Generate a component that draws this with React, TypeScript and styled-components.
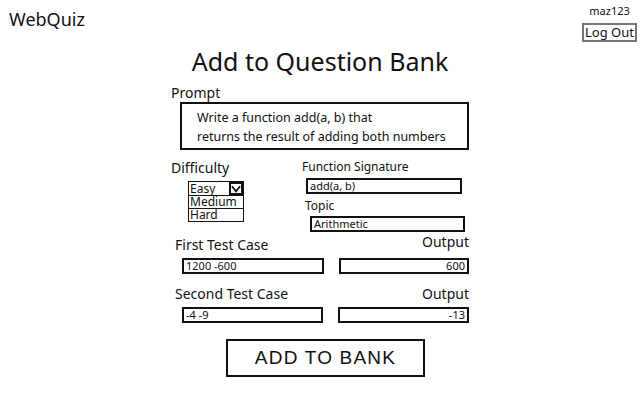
import { createGlobalStyle, styled } from "styled-components";

const GlobalStyle = createGlobalStyle`
  body {
    margin: 0;
    background: #fff;
    color: #111;
    font-family: "Noto Sans", "Open Sans", sans-serif;
  }
  * {
    box-sizing: border-box;
  }
`;

const Page = styled.div`
  width: 640px;
  height: 400px;
  display: flex;
  flex-direction: column;
`;

const Header = styled.div`
  display: flex;
  justify-content: space-between;
  align-items: flex-start;
  height: 44px;
`;

const Logo = styled.div`
  font-size: 18px;
  padding: 7px 0 0 9px;
  line-height: 24px;
`;

const UserBox = styled.div`
  display: flex;
  flex-direction: column;
  align-items: center;
  padding: 3px 3px 0 0;
`;

const UserName = styled.div`
  font-size: 11px;
  line-height: 16px;
  margin-bottom: 4px;
`;

const LogOut = styled.button`
  font-family: inherit;
  font-size: 13px;
  line-height: 13px;
  padding: 1px 1px;
  border: 2px solid #777;
  background: #fff;
  color: #111;
`;

const Title = styled.h1`
  margin: 0;
  font-size: 25px;
  font-weight: 400;
  text-align: center;
  line-height: 34px;
`;

const Form = styled.div`
  width: 298px;
  margin: 6px auto 0;
  display: flex;
  flex-direction: column;
`;

const Label = styled.div<{ $size?: number; $indent?: number; $top?: number; $lift?: number }>`
  font-size: ${(p) => p.$size ?? 13}px;
  line-height: ${(p) => (p.$size ?? 13) + 4}px;
  padding-left: ${(p) => p.$indent ?? 0}px;
  margin-top: ${(p) => p.$top ?? 0}px;
  margin-bottom: ${(p) => p.$lift ?? 0}px;
`;

const PromptBox = styled.div`
  margin-left: 9px;
  height: 48px;
  border: 2px solid #111;
  padding: 4px 0 0 15px;
  font-size: 12.5px;
  line-height: 19px;
`;

const MiddleRow = styled.div`
  display: flex;
  margin-top: 9px;
`;

const LeftCol = styled.div`
  width: 131px;
  display: flex;
  flex-direction: column;
`;

const RightCol = styled.div`
  flex: 1;
  display: flex;
  flex-direction: column;
`;

const Select = styled.div`
  margin: 4px 0 0 17px;
  width: 56px;
  border: 1px solid #111;
  display: flex;
  flex-direction: column;
`;

const Option = styled.div<{ $first?: boolean }>`
  display: flex;
  justify-content: space-between;
  align-items: center;
  font-size: 12px;
  line-height: 12px;
  padding-left: 1px;
  border-top: ${(p) => (p.$first ? "none" : "1px solid #111")};
  height: 13px;
`;

const Chevron = styled.div`
  width: 14px;
  height: 13px;
  border: 2px solid #111;
  display: flex;
  align-items: center;
  justify-content: center;
`;

const Field = styled.div<{ $width: number; $indent?: number; $top?: number; $right?: boolean }>`
  width: ${(p) => p.$width}px;
  margin-left: ${(p) => p.$indent ?? 0}px;
  margin-top: ${(p) => p.$top ?? 0}px;
  height: 16px;
  border: 2px solid #111;
  font-size: 11px;
  line-height: 12px;
  padding: 0 2px;
  text-align: ${(p) => (p.$right ? "right" : "left")};
`;

const CaseBlock = styled.div<{ $top: number }>`
  display: flex;
  flex-direction: column;
  gap: 4px;
  margin-top: ${(p) => p.$top}px;
`;

const CaseRow = styled.div`
  display: flex;
  justify-content: space-between;
  align-items: flex-end;
`;

const SubmitRow = styled.div`
  display: flex;
  justify-content: center;
  margin: 16px 0 0 11px;
`;

const SubmitButton = styled.button`
  width: 199px;
  height: 38px;
  border: 2px solid #111;
  background: #fff;
  color: #111;
  font-family: "Liberation Sans", Arial, sans-serif;
  font-size: 19px;
  letter-spacing: 1.2px;
  padding: 0;
`;

const testCases = [
  { label: "First Test Case", input: "1200 -600", output: "600", top: 1, lift: 3, inW: 142, outW: 130 },
  { label: "Second Test Case", input: "-4 -9", output: "-13", top: 11, lift: 0, inW: 141, outW: 131 },
];

export default function App() {
  return (
    <Page>
      <GlobalStyle />
      <Header>
        <Logo>WebQuiz</Logo>
        <UserBox>
          <UserName>maz123</UserName>
          <LogOut>Log Out</LogOut>
        </UserBox>
      </Header>
      <Title>Add to Question Bank</Title>
      <Form>
        <Label $size={14}>Prompt</Label>
        <PromptBox>
          Write a function add(a, b) that
          <br />
          returns the result of adding both numbers
        </PromptBox>
        <MiddleRow>
          <LeftCol>
            <Label $size={14}>Difficulty</Label>
            <Select>
              <Option $first>
                Easy
                <Chevron>
                  <svg width="11" height="8" viewBox="0 0 11 8">
                    <path d="M1 1 L5.5 6.5 L10 1" fill="none" stroke="#111" strokeWidth="2" />
                  </svg>
                </Chevron>
              </Option>
              <Option>Medium</Option>
              <Option>Hard</Option>
            </Select>
          </LeftCol>
          <RightCol>
            <Label $size={12}>Function Signature</Label>
            <Field $width={156} $indent={4} $top={3}>add(a, b)</Field>
            <Label $size={12} $indent={3} $top={4}>
              Topic
            </Label>
            <Field $width={155} $indent={8} $top={2}>Arithmetic</Field>
          </RightCol>
        </MiddleRow>
        {testCases.map((tc) => (
          <CaseBlock key={tc.label} $top={tc.top}>
            <CaseRow>
              <Label $size={14} $indent={4}>{tc.label}</Label>
              <Label $size={14} $lift={tc.lift}>Output</Label>
            </CaseRow>
            <CaseRow>
              <Field $width={tc.inW} $indent={11}>{tc.input}</Field>
              <Field $width={tc.outW} $right>{tc.output}</Field>
            </CaseRow>
          </CaseBlock>
        ))}
        <SubmitRow>
          <SubmitButton>ADD TO BANK</SubmitButton>
        </SubmitRow>
      </Form>
    </Page>
  );
}
